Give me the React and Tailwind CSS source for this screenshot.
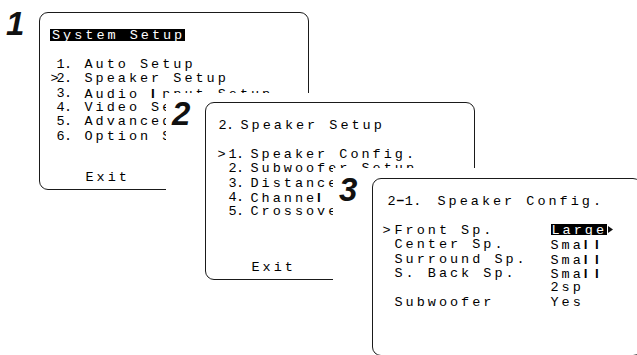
import React from 'react';
import clsx from 'clsx';

const mono =
  "font-['Liberation_Mono','DejaVu_Sans_Mono',monospace] text-[13.5px] leading-[14.4px] tracking-[3px] text-black";

const Panel = ({ n, className, boxClass, numClass, children }) => (
  <div className={clsx('absolute flex bg-white', className)}>
    <div
      className={clsx(
        "w-[39px] shrink-0 pl-[6px] font-['Liberation_Sans',Arial,sans-serif] text-[33px] font-bold italic leading-[33px] text-[#111]",
        numClass
      )}
    >
      {n}
    </div>
    <div
      className={clsx(
        'flex h-[178px] w-[270px] shrink-0 flex-col rounded-[9px] border-[1.5px] border-[#1a1a1a] pt-[16px] pb-[4px]',
        mono,
        boxClass
      )}
    >
      {children}
    </div>
  </div>
);

const MenuRow = ({ active, num, label, markerPl, markerW, numW }) => (
  <div className="flex h-[14.4px] whitespace-pre">
    <span className="shrink-0" style={{ paddingLeft: markerPl, width: markerPl + markerW }}>
      {active ? '>' : ''}
    </span>
    <span className="shrink-0 tracking-[-0.5px]" style={{ width: numW }}>
      {num}
    </span>
    <span>{label}</span>
  </div>
);

// the thick upright strokes of the OSD font (I, l)
const Bar = ({ children }) => (
  <span className="inline-block w-[11.1px] font-['Liberation_Sans',Arial,sans-serif] font-bold tracking-normal">
    {children}
  </span>
);

const setupItems = [
  ['1.', 'Auto Setup'],
  ['2.', 'Speaker Setup'],
  ['3.', <>Audio <Bar>I</Bar>nput Setup</>],
  ['4.', 'Video Setup'],
  ['5.', 'Advanced Setup'],
  ['6.', 'Option Setup'],
];

const speakerItems = [
  ['1.', 'Speaker Config.'],
  ['2.', 'Subwoofer Setup'],
  ['3.', 'Distance'],
  ['4.', <>Channe<Bar>l</Bar> Level</>],
  ['5.', 'Crossover Freq.'],
];

const small = <>Sma<Bar>l</Bar><Bar>l</Bar></>;

const configRows = [
  ['Front Sp.', 'Large'],
  ['Center Sp.', small],
  ['Surround Sp.', small],
  ['S. Back Sp.', small],
  ['', '2sp'],
  ['Subwoofer', 'Yes'],
];

export default function App() {
  return (
    <div className="relative h-[355px] w-[637px] overflow-hidden bg-white">
      <Panel n="1" className="left-0 top-[2px]" numClass="pt-[5px]" boxClass="mt-[10px]">
        <div className="flex h-[14.4px] pl-[9.5px]">
          <span className="h-[12px] whitespace-pre bg-black pl-[2.5px] leading-[14px] text-white">System Setup</span>
        </div>
        <div className="h-[14.4px]" />
        {setupItems.map(([num, label], i) => (
          <MenuRow key={num} active={i === 1} num={num} label={label} markerPl={10.5} markerW={6} numW={28} />
        ))}
        <div className="mt-auto pl-[45.5px]">Exit</div>
      </Panel>

      <Panel n="2" className="left-[166px] top-[93px]" numClass="pt-[4px]" boxClass="mt-[9px]">
        <div className="flex h-[14.4px] whitespace-pre pl-[12.5px]">
          <span className="w-[22px] shrink-0 tracking-[-0.5px]">2.</span>
          <span>Speaker Setup</span>
        </div>
        <div className="h-[14.4px]" />
        {speakerItems.map(([num, label], i) => (
          <MenuRow key={num} active={i === 0} num={num} label={label} markerPl={11.5} markerW={11} numW={22} />
        ))}
        <div className="mt-auto pl-[45.5px]">Exit</div>
      </Panel>

      <Panel n="3" className="left-[333px] top-[168px]" numClass="pt-[5px]" boxClass="mt-[10px]">
        <div className="flex h-[14.4px] whitespace-pre pl-[14.5px]">
          <span className="w-[50px] shrink-0 tracking-[0.5px]">
            2<span className="font-bold">−</span>1.
          </span>
          <span>Speaker Config.</span>
        </div>
        <div className="h-[14.4px]" />
        {configRows.map(([label, value], i) => (
          <div key={i} className="flex h-[14.4px] items-start whitespace-pre">
            <span className="w-[21.5px] shrink-0 pl-[9.5px]">{i === 0 ? '>' : ''}</span>
            <span className="w-[156px] shrink-0">{label}</span>
            {i === 0 ? (
              <>
                <span className="mt-[0.5px] h-[11px] bg-black pl-[1px] leading-[13px] text-white">{value}</span>
                <svg className="ml-[1px] mt-[2.5px]" width="5" height="7" viewBox="0 0 5 7">
                  <polygon points="0,0 5,3.5 0,7" fill="#111" />
                </svg>
              </>
            ) : (
              <span>{value}</span>
            )}
          </div>
        ))}
      </Panel>
    </div>
  );
}
